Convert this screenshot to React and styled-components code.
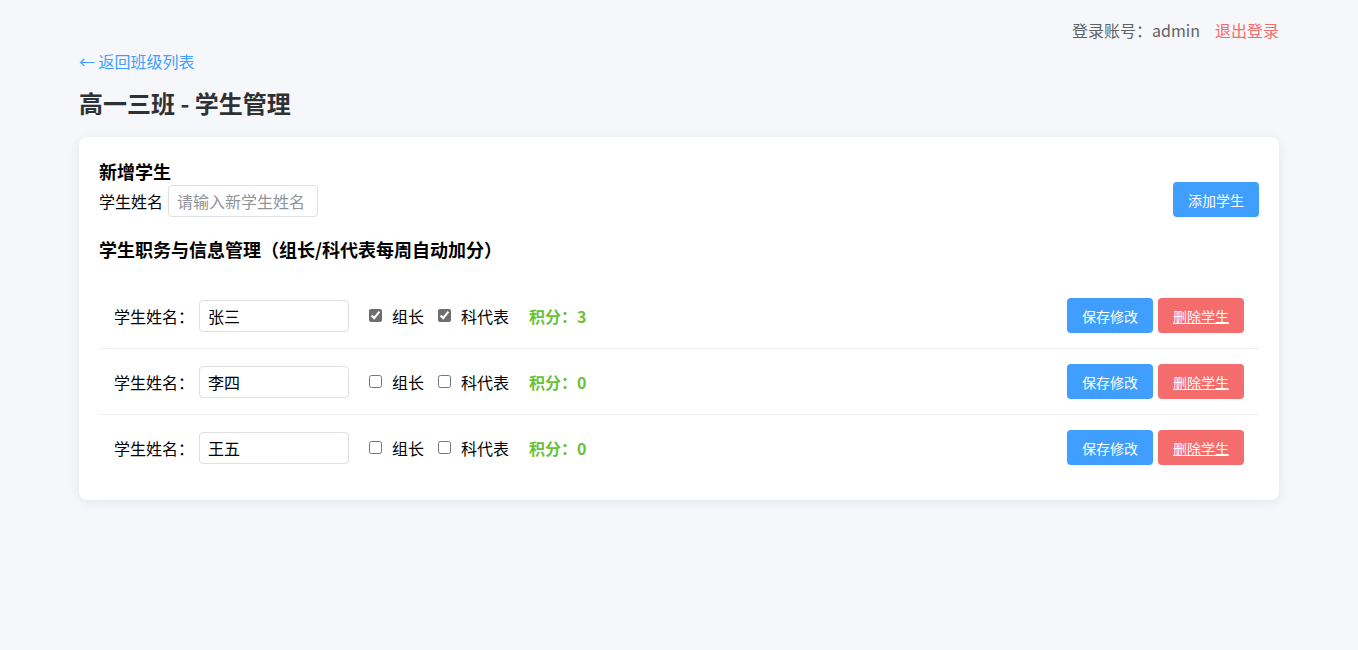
import React, { useState } from 'react'
import styled, { createGlobalStyle } from 'styled-components'

const GlobalStyle = createGlobalStyle`
  body {
    margin: 0;
    background: #f5f7fa;
    font-family: "Noto Sans CJK SC", "Noto Sans", "Liberation Sans", sans-serif;
    color: #000;
  }
`

const initialStudents = [
  { id: 1, name: '张三', leader: true, rep: true, score: 3 },
  { id: 2, name: '李四', leader: false, rep: false, score: 0 },
  { id: 3, name: '王五', leader: false, rep: false, score: 0 },
]

const App = () => {
  const [students, setStudents] = useState(initialStudents)
  const [newName, setNewName] = useState('')

  const update = (id, key, value) => {
    setStudents(students.map((s) => (s.id === id ? { ...s, [key]: value } : s)))
  }

  return (
    <>
      <GlobalStyle />
      <Page>
        <TopBar>
          <Account>登录账号：admin</Account>
          <Logout>退出登录</Logout>
        </TopBar>

        <BackLink href="#">← 返回班级列表</BackLink>
        <Title>高一三班 - 学生管理</Title>

        <Card>
          <AddSection>
            <div>
              <SubTitle>新增学生</SubTitle>
              <AddRow>
                <span>学生姓名</span>
                <NameInput
                  placeholder="请输入新学生姓名"
                  value={newName}
                  onChange={(e) => setNewName(e.target.value)}
                />
              </AddRow>
            </div>
            <Button>添加学生</Button>
          </AddSection>

          <ListTitle>学生职务与信息管理（组长/科代表每周自动加分）</ListTitle>

          {students.map((s) => (
            <StudentRow key={s.id}>
              <RowLabel>学生姓名：</RowLabel>
              <RowInput
                value={s.name}
                onChange={(e) => update(s.id, 'name', e.target.value)}
              />
              <Check>
                <input
                  type="checkbox"
                  checked={s.leader}
                  onChange={(e) => update(s.id, 'leader', e.target.checked)}
                />
                组长
              </Check>
              <Check>
                <input
                  type="checkbox"
                  checked={s.rep}
                  onChange={(e) => update(s.id, 'rep', e.target.checked)}
                />
                科代表
              </Check>
              <Score>积分：{s.score}</Score>
              <Actions>
                <Button>保存修改</Button>
                <Button $danger>删除学生</Button>
              </Actions>
            </StudentRow>
          ))}
        </Card>
      </Page>
    </>
  )
}

export default App

const Page = styled.div`
  max-width: 1200px;
  margin: 0 auto;
  padding: 19px 0;
`

const TopBar = styled.div`
  display: flex;
  justify-content: flex-end;
  align-items: center;
  gap: 15px;
  font-size: 16px;
  line-height: 22px;
`

const Account = styled.span`
  color: #606266;
`

const Logout = styled.span`
  color: #f56c6c;
  cursor: pointer;
`

const BackLink = styled.a`
  display: inline-block;
  margin-top: 9px;
  color: #409eff;
  font-size: 16px;
  line-height: 22px;
  text-decoration: none;
`

const Title = styled.h2`
  margin: 14px 0 18px;
  font-size: 24px;
  line-height: 32px;
  font-weight: 700;
  color: #303133;
`

const Card = styled.div`
  background: #fff;
  border-radius: 8px;
  box-shadow: 0 2px 12px rgba(0, 0, 0, 0.08);
  padding: 20px;
`

const AddSection = styled.div`
  display: flex;
  justify-content: space-between;
  align-items: flex-end;
`

const SubTitle = styled.h3`
  margin: 0;
  font-size: 18px;
  line-height: 28px;
  font-weight: 700;
`

const AddRow = styled.div`
  display: flex;
  align-items: center;
  gap: 5px;
  font-size: 16px;
`

const NameInput = styled.input`
  width: 150px;
  height: 32px;
  box-sizing: border-box;
  padding: 0 8px;
  border: 1px solid #dcdfe6;
  border-radius: 4px;
  font-family: inherit;
  font-size: 16px;
  outline: none;
  &::placeholder {
    color: #909399;
  }
`

const ListTitle = styled.h3`
  margin: 18px 0 20px;
  font-size: 18px;
  line-height: 28px;
  font-weight: 700;
`

const StudentRow = styled.div`
  display: flex;
  align-items: center;
  padding: 15px;
  border-bottom: 1px solid #ebeef5;
  &:last-child {
    border-bottom: none;
  }
`

const RowLabel = styled.span`
  font-size: 16px;
  margin-right: 5px;
`

const RowInput = styled(NameInput)`
  margin-right: 20px;
`

const Check = styled.label`
  display: flex;
  align-items: center;
  gap: 10px;
  font-size: 16px;
  margin-right: 14px;
  input {
    margin: 0;
    width: 13px;
    height: 13px;
    accent-color: #6e6e6e;
  }
`

const Score = styled.span`
  margin-left: 6px;
  color: #67c23a;
  font-weight: 700;
  font-size: 16px;
`

const Actions = styled.div`
  margin-left: auto;
  display: flex;
  gap: 5px;
`

const Button = styled.button`
  height: 35px;
  padding: 0 15px;
  border: none;
  border-radius: 4px;
  background: ${(p) => (p.$danger ? '#f56c6c' : '#409eff')};
  color: #fff;
  font-family: inherit;
  font-size: 14px;
  text-decoration: ${(p) => (p.$danger ? 'underline' : 'none')};
  cursor: pointer;
`
